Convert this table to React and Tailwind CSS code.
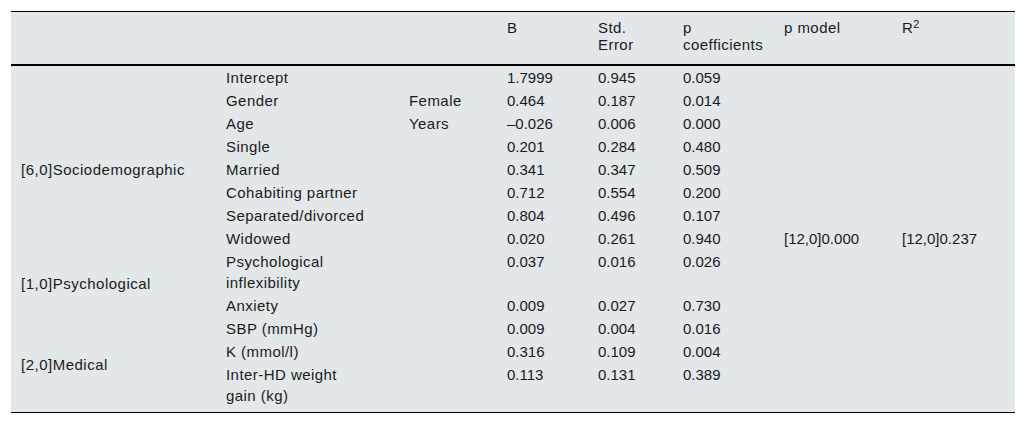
// Regression table: coefficients by predictor group, with model p and R².
const rows = [
  { name: "Intercept", unit: "", b: "1.7999", se: "0.945", p: "0.059" },
  { group: "[6,0]Sociodemographic", span: 7, name: "Gender", unit: "Female", b: "0.464", se: "0.187", p: "0.014" },
  { name: "Age", unit: "Years", b: "–0.026", se: "0.006", p: "0.000" },
  { name: "Single", unit: "", b: "0.201", se: "0.284", p: "0.480" },
  { name: "Married", unit: "", b: "0.341", se: "0.347", p: "0.509" },
  { name: "Cohabiting partner", unit: "", b: "0.712", se: "0.554", p: "0.200" },
  { name: "Separated/divorced", unit: "", b: "0.804", se: "0.496", p: "0.107" },
  { name: "Widowed", unit: "", b: "0.020", se: "0.261", p: "0.940", model: "[12,0]0.000", r2: "[12,0]0.237" },
  { group: "[1,0]Psychological", span: 2, name: ["Psychological", "inflexibility"], unit: "", b: "0.037", se: "0.016", p: "0.026" },
  { name: "Anxiety", unit: "", b: "0.009", se: "0.027", p: "0.730" },
  { group: "[2,0]Medical", span: 3, name: "SBP (mmHg)", unit: "", b: "0.009", se: "0.004", p: "0.016" },
  { name: "K (mmol/l)", unit: "", b: "0.316", se: "0.109", p: "0.004" },
  { name: ["Inter-HD weight", "gain (kg)"], unit: "", b: "0.113", se: "0.131", p: "0.389", last: true },
];

const lines = (v) =>
  Array.isArray(v) ? (
    <>
      {v[0]}
      <br />
      {v[1]}
    </>
  ) : (
    v
  );

export default function App() {
  const th = "pl-[10px] pt-[7px] pb-[11px] font-normal tracking-[0.45px]";
  return (
    <div
      className="min-h-[424px] w-[1026px] bg-white pt-[11px] pl-[11px] text-[15px] text-[#1b1b1b]"
      style={{ fontFamily: '"Liberation Sans", Arial, sans-serif' }}
    >
      <table className="w-[1004px] table-fixed border-collapse bg-[#e2e7ea] leading-[21px]">
        <colgroup>
          <col className="w-[205px]" />
          <col className="w-[183px]" />
          <col className="w-[98px]" />
          <col className="w-[91px]" />
          <col className="w-[85px]" />
          <col className="w-[101px]" />
          <col className="w-[118px]" />
          <col className="w-[123px]" />
        </colgroup>
        <thead>
          <tr className="border-t border-b-2 border-black text-left align-top leading-[17px]">
            <th className={th} />
            <th className={th} />
            <th className={th} />
            <th className={th}>B</th>
            <th className={th}>
              Std.
              <br />
              Error
            </th>
            <th className={th}>
              p
              <br />
              coefficients
            </th>
            <th className={th}>p model</th>
            <th className={th}>
              R<sup className="text-[11px]">2</sup>
            </th>
          </tr>
        </thead>
        <tbody className="border-b border-black">
          {rows.map((r, i) => {
            const td = r.last ? "pl-[10px] pt-px pb-[6px] align-top" : "pl-[10px] py-px align-top";
            return (
              <tr key={i}>
                {i === 0 && <td className={td} />}
                {r.group && (
                  <td rowSpan={r.span} className="pl-[10px] align-middle tracking-[0.5px]">
                    {r.group}
                  </td>
                )}
                <td className={`${td} tracking-[0.45px]`}>{lines(r.name)}</td>
                <td className={`${td} tracking-[0.45px]`}>{r.unit}</td>
                <td className={td}>{r.b}</td>
                <td className={td}>{r.se}</td>
                <td className={td}>{r.p}</td>
                <td className={td}>{r.model || ""}</td>
                <td className={td}>{r.r2 || ""}</td>
              </tr>
            );
          })}
        </tbody>
      </table>
    </div>
  );
}
